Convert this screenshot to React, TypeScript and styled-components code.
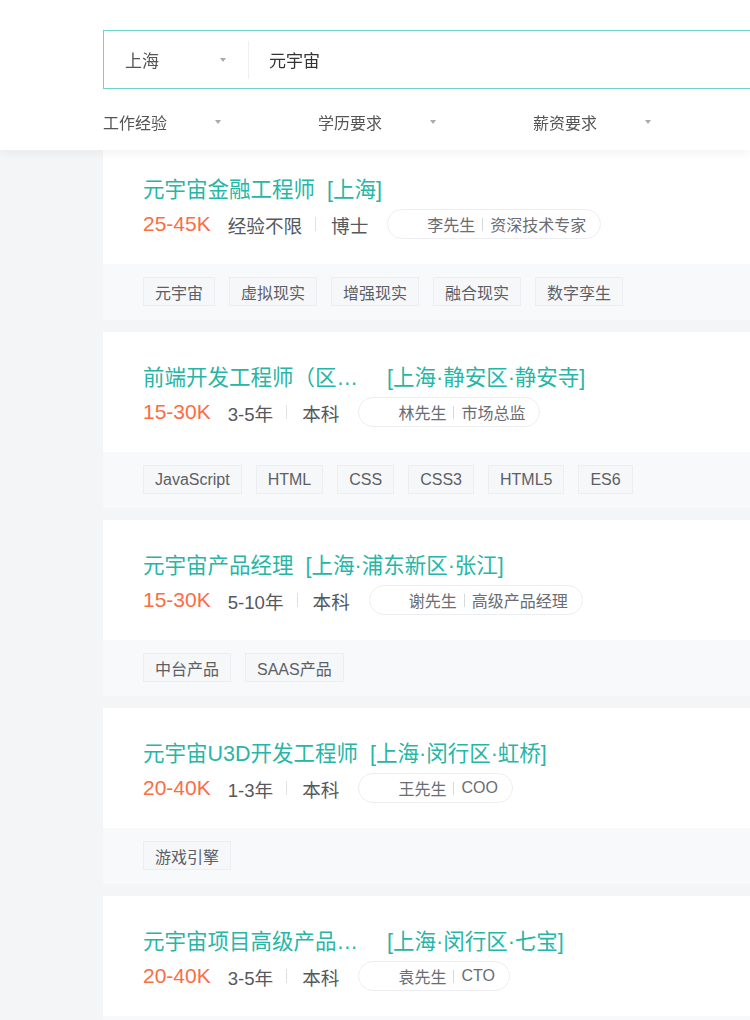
import styled, { createGlobalStyle } from 'styled-components';

type Job = {
    title: string;
    location: string;
    salary: string;
    experience: string;
    degree: string;
    contact: string;
    role: string;
    tags: string[];
};

const jobs: Job[] = [
    {
        title: '元宇宙金融工程师',
        location: '[上海]',
        salary: '25-45K',
        experience: '经验不限',
        degree: '博士',
        contact: '李先生',
        role: '资深技术专家',
        tags: ['元宇宙', '虚拟现实', '增强现实', '融合现实', '数字孪生'],
    },
    {
        title: '前端开发工程师（区块链方向）',
        location: '[上海·静安区·静安寺]',
        salary: '15-30K',
        experience: '3-5年',
        degree: '本科',
        contact: '林先生',
        role: '市场总监',
        tags: ['JavaScript', 'HTML', 'CSS', 'CSS3', 'HTML5', 'ES6'],
    },
    {
        title: '元宇宙产品经理',
        location: '[上海·浦东新区·张江]',
        salary: '15-30K',
        experience: '5-10年',
        degree: '本科',
        contact: '谢先生',
        role: '高级产品经理',
        tags: ['中台产品', 'SAAS产品'],
    },
    {
        title: '元宇宙U3D开发工程师',
        location: '[上海·闵行区·虹桥]',
        salary: '20-40K',
        experience: '1-3年',
        degree: '本科',
        contact: '王先生',
        role: 'COO',
        tags: ['游戏引擎'],
    },
    {
        title: '元宇宙项目高级产品经理',
        location: '[上海·闵行区·七宝]',
        salary: '20-40K',
        experience: '3-5年',
        degree: '本科',
        contact: '袁先生',
        role: 'CTO',
        tags: ['元宇宙'],
    },
];

const GlobalStyle = createGlobalStyle`
    html, body {
        margin: 0;
        padding: 0;
        background: #f4f5f7;
        overflow: hidden;
        font-family: "Liberation Sans", "Noto Sans CJK SC", sans-serif;
    }
`;

const Page = styled.div`
    width: 750px;
    height: 1020px;
    overflow: hidden;
    background: #f4f5f7;
`;

const Header = styled.header`
    position: sticky;
    top: 0;
    z-index: 2;
    background: #fff;
    box-shadow: 0 3px 10px rgba(0, 0, 0, 0.05);
    padding: 30px 0 17px 103px;
`;

const SearchBox = styled.div`
    display: flex;
    align-items: center;
    width: 900px;
    height: 57px;
    border: 1px solid #6dd3cd;
`;

const City = styled.div`
    display: flex;
    align-items: center;
    justify-content: space-between;
    width: 145px;
    box-sizing: border-box;
    padding: 0 22px 0 21px;
    font-size: 17px;
    color: #555;
    border-right: 1px solid #f0f0f0;
    height: 38px;
`;

const Keyword = styled.div`
    padding-left: 20px;
    font-size: 17px;
    color: #333;
`;

const Caret = styled.span`
    width: 0;
    height: 0;
    border-left: 3px solid transparent;
    border-right: 3px solid transparent;
    border-top: 4px solid #aaa;
`;

const Filters = styled.div`
    display: flex;
    margin-top: 22px;
    height: 22px;
    align-items: center;
`;

const Filter = styled.div`
    display: flex;
    align-items: center;
    width: 215px;
    font-size: 16px;
    color: #555;

    span:first-child {
        width: 112px;
    }
`;

const List = styled.div`
    display: flex;
    flex-direction: column;
    gap: 12px;
    margin-top: -6px;
    padding-left: 103px;
`;

const Card = styled.div`
    width: 900px;
    background: #fff;
`;

const Main = styled.div`
    padding: 29px 40px 25px;
`;

const TitleRow = styled.div`
    display: flex;
    align-items: center;
    height: 28px;
    font-size: 21.5px;
    color: #27b6a6;
    gap: 12px;
`;

const Title = styled.span`
    max-width: 232px;
    white-space: nowrap;
    overflow: hidden;
    text-overflow: ellipsis;
`;

const MetaRow = styled.div`
    display: flex;
    align-items: center;
    margin-top: 8px;
    height: 30px;
`;

const Salary = styled.span`
    font-size: 21px;
    color: #fb6d43;
    margin-right: 17px;
`;

const Meta = styled.span`
    font-size: 18.6px;
    color: #55585e;
`;

const Sep = styled.span`
    width: 1px;
    height: 14px;
    background: #dfe1e4;
    margin: 0 15px 0 13px;
`;

const Contact = styled.div`
    display: flex;
    align-items: center;
    height: 30px;
    box-sizing: border-box;
    margin-left: 19px;
    padding: 0 14px 0 39px;
    border: 1px solid #eceef1;
    border-radius: 16px;
    font-size: 16px;
    color: #6a6d73;
`;

const ContactSep = styled.span`
    width: 1px;
    height: 13px;
    background: #d5d8dc;
    margin: 0 7px;
`;

const TagArea = styled.div`
    display: flex;
    gap: 14px;
    padding: 13px 40px 14px;
    background: #f8f9fb;
`;

const Tag = styled.span`
    display: flex;
    align-items: center;
    height: 29px;
    box-sizing: border-box;
    padding: 0 11px;
    border: 1px solid #eceef1;
    background: #f6f7f9;
    font-size: 16px;
    color: #5c5f66;
`;

const App = () => {
    return (
        <Page>
            <GlobalStyle />
            <Header>
                <SearchBox>
                    <City>
                        上海
                        <Caret />
                    </City>
                    <Keyword>元宇宙</Keyword>
                </SearchBox>
                <Filters>
                    {['工作经验', '学历要求', '薪资要求'].map((f) => (
                        <Filter key={f}>
                            <span>{f}</span>
                            <Caret />
                        </Filter>
                    ))}
                </Filters>
            </Header>
            <List>
                {jobs.map((job) => (
                    <Card key={job.title}>
                        <Main>
                            <TitleRow>
                                <Title>{job.title}</Title>
                                <span>{job.location}</span>
                            </TitleRow>
                            <MetaRow>
                                <Salary>{job.salary}</Salary>
                                <Meta>{job.experience}</Meta>
                                <Sep />
                                <Meta>{job.degree}</Meta>
                                <Contact>
                                    {job.contact}
                                    <ContactSep />
                                    {job.role}
                                </Contact>
                            </MetaRow>
                        </Main>
                        <TagArea>
                            {job.tags.map((t) => (
                                <Tag key={t}>{t}</Tag>
                            ))}
                        </TagArea>
                    </Card>
                ))}
            </List>
        </Page>
    );
};

export default App;
